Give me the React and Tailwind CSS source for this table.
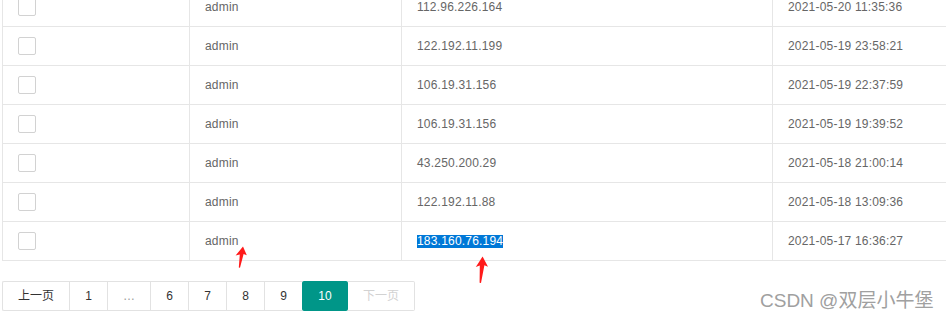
import React from 'react';

const rows = [
  { user: 'admin', ip: '112.96.226.164', time: '2021-05-20 11:35:36' },
  { user: 'admin', ip: '122.192.11.199', time: '2021-05-19 23:58:21' },
  { user: 'admin', ip: '106.19.31.156', time: '2021-05-19 22:37:59' },
  { user: 'admin', ip: '106.19.31.156', time: '2021-05-19 19:39:52' },
  { user: 'admin', ip: '43.250.200.29', time: '2021-05-18 21:00:14' },
  { user: 'admin', ip: '122.192.11.88', time: '2021-05-18 13:09:36' },
  { user: 'admin', ip: '183.160.76.194', time: '2021-05-17 16:36:27', selected: true },
];

const Checkbox = () => (
  <div className="w-[18px] h-[18px] border border-[#d2d2d2] rounded-[2px] bg-white" />
);

const Cell = ({ children, className = '' }) => (
  <div className={`h-[39px] border-l border-b border-[#e6e6e6] px-[15px] flex items-center ${className}`}>
    {children}
  </div>
);

// little red hand-drawn arrows from the screenshot
const Arrow = ({ className, d, w, h }) => (
  <svg className={`absolute ${className}`} width={w} height={h} viewBox={`0 0 ${w} ${h}`}>
    <path d={d} fill="#ff1a1a" />
  </svg>
);

const Pager = () => {
  const item = 'h-[30px] flex items-center justify-center border-l border-y border-[#e2e2e2] bg-white';
  return (
    <div className="flex text-[12px] text-[#333]" style={{ fontFamily: '"Liberation Sans", "Noto Sans CJK SC", sans-serif' }}>
      <div className={`${item} w-[67px] rounded-l-[2px]`}>上一页</div>
      <div className={`${item} w-[38px]`}>1</div>
      <div className={`${item} w-[43px] text-[#999]`}>…</div>
      <div className={`${item} w-[38px]`}>6</div>
      <div className={`${item} w-[38px]`}>7</div>
      <div className={`${item} w-[38px]`}>8</div>
      <div className={`${item} w-[38px]`}>9</div>
      <div className="h-[30px] w-[46px] flex items-center justify-center bg-[#009688] text-white rounded-[2px]">10</div>
      <div className="h-[30px] w-[67px] flex items-center justify-center border-y border-r border-[#e2e2e2] text-[#d2d2d2] rounded-r-[2px]">下一页</div>
    </div>
  );
};

export default function App() {
  return (
    <div className="relative w-[946px] h-[321px] overflow-hidden bg-white pl-[2px]" style={{ fontFamily: '"Liberation Sans", Arial, sans-serif' }}>
      <div className="w-[960px] -mt-[13px] border-t border-[#e6e6e6] grid grid-cols-[187px_212px_371px_190px] text-[12px] text-[#666] tracking-[0.2px]">
        {rows.map((r, i) => (
          <React.Fragment key={i}>
            <Cell><Checkbox /></Cell>
            <Cell>{r.user}</Cell>
            <Cell>
              {r.selected ? (
                <span className="bg-[#0078d7] text-white leading-[13px]">{r.ip}</span>
              ) : (
                r.ip
              )}
            </Cell>
            <Cell>{r.time}</Cell>
          </React.Fragment>
        ))}
      </div>

      <div className="mt-[20px]">
        <Pager />
      </div>

      <Arrow
        className="left-[233px] top-[245px]"
        w={16}
        h={25}
        d="M10 1.5 L13.8 10.2 L10.6 9 L7 22.8 L5.8 22.6 L6.8 9.6 L2.6 10.6 Z"
      />
      <Arrow
        className="left-[474px] top-[254px]"
        w={16}
        h={31}
        d="M8.6 2.5 L14 12.8 L10.4 11.2 L7 29 L5.6 28.8 L5.8 11.6 L1.8 13 Z"
      />

      <div
        className="absolute left-[760px] top-[287px] text-[19px] text-[#a0a0a0] whitespace-nowrap"
        style={{ fontFamily: '"Liberation Sans", "Noto Sans CJK SC", sans-serif' }}
      >
        CSDN @双层小牛堡
      </div>
    </div>
  );
}
